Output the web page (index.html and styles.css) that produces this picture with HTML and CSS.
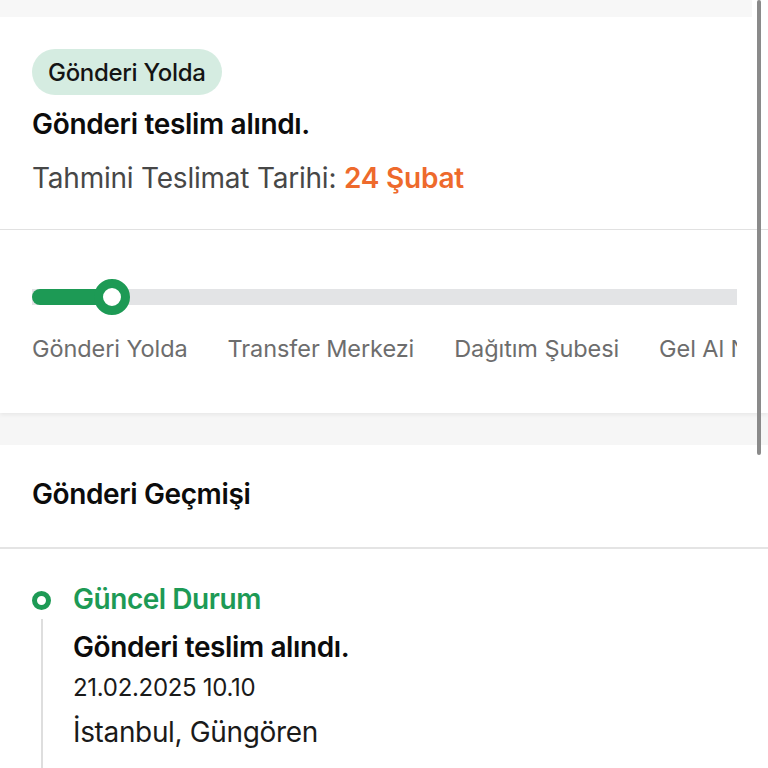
FILE: index.html
```html
<!DOCTYPE html>
<html lang="tr">
<head>
<meta charset="utf-8">
<link rel="stylesheet" href="styles.css">
</head>
<body>
<div class="page">
  <div class="top-strip"></div>
  <section class="summary">
    <span class="badge">Gönderi Yolda</span>
    <h2 class="summary-title">Gönderi teslim alındı.</h2>
    <p class="eta">Tahmini Teslimat Tarihi: <span class="eta-date">24 Şubat</span></p>
  </section>
  <section class="progress">
    <div class="progress-inner">
      <div class="track">
        <div class="fill"></div>
        <div class="knob"></div>
      </div>
      <div class="steps">
        <span>Gönderi Yolda</span>
        <span>Transfer Merkezi</span>
        <span>Dağıtım Şubesi</span>
        <span>Gel Al Noktası</span>
      </div>
    </div>
  </section>
  <div class="gap"></div>
  <section class="history">
    <h3 class="history-title">Gönderi Geçmişi</h3>
    <div class="timeline">
      <div class="event">
        <div class="rail">
          <span class="dot"></span>
          <span class="line"></span>
        </div>
        <div class="event-body">
          <div class="event-status">Güncel Durum</div>
          <div class="event-title">Gönderi teslim alındı.</div>
          <div class="event-date">21.02.2025 10.10</div>
          <div class="event-place">İstanbul, Güngören</div>
        </div>
      </div>
    </div>
  </section>
  <div class="scrollbar"></div>
</div>
</body>
</html>
```
FILE: styles.css
```css
* { box-sizing: border-box; }
html, body { margin: 0; padding: 0; }
body {
  font-family: Inter, "Noto Sans", sans-serif;
  background: #ffffff;
  color: #111;
  width: 768px;
  height: 768px;
  overflow: hidden;
}
.page {
  position: relative;
  width: 768px;
  height: 768px;
  overflow: hidden;
  background: #ffffff;
}
.top-strip {
  height: 17px;
  background: #f7f7f7;
  margin-right: 16px;
}
.summary {
  padding: 32px 32px 0 32px;
  height: 213px;
  border-bottom: 1px solid #e2e2e2;
}
.badge {
  display: inline-flex;
  align-items: center;
  height: 46px;
  padding: 0 16px;
  border-radius: 23px;
  background: #d5ece1;
  color: #141414;
  font-size: 24px;
  font-weight: 500;
  letter-spacing: -0.3px;
}
.summary-title {
  margin: 12px 0 0 0;
  font-size: 28px;
  font-weight: 600;
  line-height: 34px;
  letter-spacing: -0.32px;
  color: #0c0c0c;
}
.eta {
  margin: 20px 0 0 0;
  font-size: 28px;
  line-height: 34px;
  color: #474747;
  letter-spacing: -0.22px;
}
.eta-date {
  color: #ee6a2c;
  font-weight: 600;
}
.progress {
  height: 183px;
  background: #fff;
  box-shadow: 0 2px 4px rgba(0,0,0,0.06);
  position: relative;
  z-index: 1;
}
.progress-inner {
  margin: 0 31px 0 32px;
  padding-top: 49px;
  overflow: hidden;
}
.track {
  position: relative;
  height: 38px;
}
.track::before {
  content: "";
  position: absolute;
  left: 0;
  right: 0;
  top: 10px;
  height: 16px;
  background: #e3e4e6;
}
.fill {
  position: absolute;
  left: 0;
  top: 10px;
  width: 80px;
  height: 16px;
  border-radius: 8px;
  background: #1d9a55;
}
.knob {
  position: absolute;
  left: 62px;
  top: 0;
  width: 36px;
  height: 36px;
  border-radius: 50%;
  border: 9px solid #1d9a55;
  background: #fff;
}
.steps {
  display: flex;
  gap: 40px;
  margin-top: 18px;
  white-space: nowrap;
  font-size: 23.5px;
  line-height: 28px;
  color: #6d6d6d;
  letter-spacing: -0.08px;
}
.gap {
  height: 32px;
  background: #f6f6f6;
}
.history {
  background: #fff;
}
.history-title {
  margin: 0;
  height: 104px;
  padding: 32px 32px 0 32px;
  font-size: 28px;
  font-weight: 600;
  line-height: 34px;
  letter-spacing: -0.38px;
  border-bottom: 2px solid #e4e4e4;
  color: #0c0c0c;
}
.timeline {
  padding: 33px 32px 0 32px;
}
.event {
  display: flex;
  gap: 22px;
}
.rail {
  width: 19px;
  display: flex;
  flex-direction: column;
  align-items: center;
}
.dot {
  width: 19px;
  height: 19px;
  border-radius: 50%;
  border: 5.5px solid #1d9a55;
  margin-top: 9px;
}
.line {
  width: 2px;
  flex: 1;
  margin-top: 9px;
  background: #dedede;
  min-height: 200px;
}
.event-body {
  display: flex;
  flex-direction: column;
}
.event-status {
  font-size: 28px;
  font-weight: 600;
  color: #1d9a55;
  line-height: 34px;
  letter-spacing: -0.45px;
}
.event-title {
  margin-top: 14px;
  font-size: 28px;
  font-weight: 600;
  line-height: 34px;
  letter-spacing: -0.4px;
  color: #0c0c0c;
}
.event-date {
  margin-top: 9px;
  font-size: 24px;
  line-height: 30px;
  color: #1a1a1a;
  letter-spacing: -0.3px;
}
.event-place {
  margin-top: 12px;
  font-size: 28px;
  line-height: 34px;
  color: #1a1a1a;
  letter-spacing: -0.35px;
}
.scrollbar {
  position: absolute;
  top: 0;
  left: 757px;
  width: 4px;
  height: 455px;
  border-radius: 2px;
  background: #8a8a8a;
  z-index: 5;
}
```
